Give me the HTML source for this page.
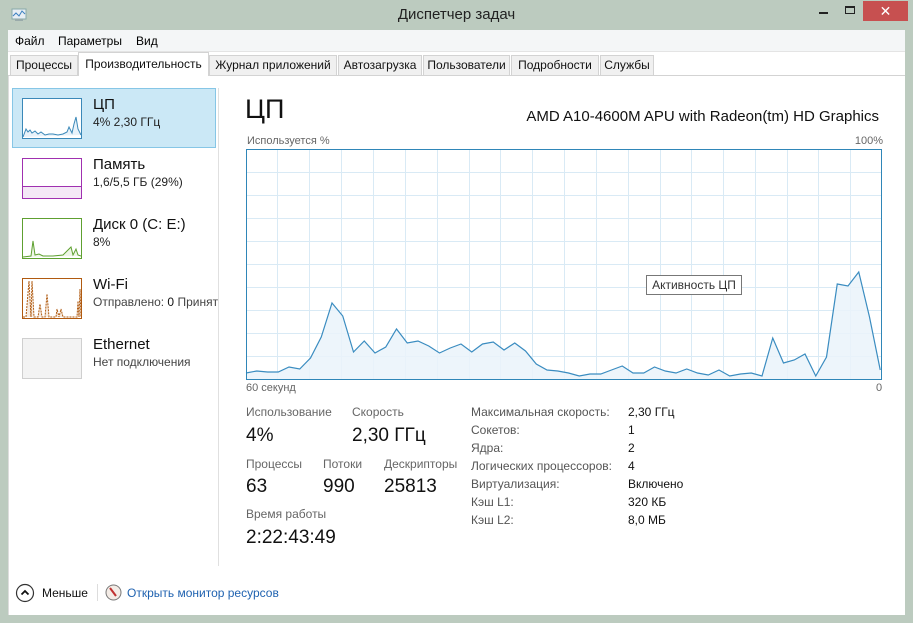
<!DOCTYPE html>
<html><head><meta charset="utf-8"><style>
*{margin:0;padding:0;box-sizing:border-box}
body{width:913px;height:623px;background:#bccbbf;font-family:"Liberation Sans","DejaVu Sans",sans-serif;position:relative;overflow:hidden;color:#000}
.a{position:absolute;white-space:nowrap}
.tab{position:absolute;top:55px;height:20px;background:#f0f0f0;border:1px solid #d3d3d3;border-bottom:none;font-size:12px;line-height:19px;text-align:center;color:#111}
.nm{font-size:15px;color:#111}
.sb{font-size:12px;color:#444}
.th{position:absolute;left:22px;width:60px;height:41px;background:#fff}
.lb{font-size:12px;color:#666}
.bv{font-size:19px;color:#111}
.k{font-size:12px;color:#555}
.v{font-size:12px;color:#111}
</style></head><body>
<!-- title -->
<svg class="a" style="left:10px;top:8px" width="18" height="14"><rect x="2" y="1" width="14" height="10" fill="#e8eef4" stroke="#8aa" stroke-width="1"/><polyline points="3,8 6,5 9,8 12,3 15,6" fill="none" stroke="#3a7fc0" stroke-width="1"/><rect x="5" y="11" width="8" height="2" fill="#9aa"/></svg>
<div class="a" style="left:0;width:913px;top:6px;text-align:center;font-size:15px;color:#222">Диспетчер задач</div>
<div class="a" style="left:819px;top:12px;width:9px;height:2px;background:#222"></div>
<div class="a" style="left:845px;top:6px;width:10px;height:8px;border:1px solid #222;border-top-width:2px"></div>
<div class="a" style="left:863px;top:1px;width:45px;height:20px;background:#c75050;color:#fff;text-align:center;font-size:14px;line-height:20px">✕</div>
<!-- body -->
<div class="a" style="left:8px;top:30px;width:897px;height:585px;background:#fff"></div>
<div class="a" style="left:8px;top:30px;width:897px;height:22px;background:#f4f6f7;border-bottom:1px solid #e4e4e4"></div>
<div class="a" style="left:15px;top:34px;font-size:12px">Файл</div>
<div class="a" style="left:58px;top:34px;font-size:12px">Параметры</div>
<div class="a" style="left:136px;top:34px;font-size:12px">Вид</div>
<div class="a" style="left:8px;top:75px;width:897px;height:1px;background:#d3d3d3"></div>
<div class="tab" style="left:10px;width:68px">Процессы</div>
<div class="tab" style="left:78px;width:131px;top:52px;height:24px;background:#fff;line-height:23px;z-index:2">Производительность</div>
<div class="tab" style="left:209px;width:128px">Журнал приложений</div>
<div class="tab" style="left:338px;width:84px">Автозагрузка</div>
<div class="tab" style="left:423px;width:87px">Пользователи</div>
<div class="tab" style="left:511px;width:88px">Подробности</div>
<div class="tab" style="left:600px;width:54px">Службы</div>
<!-- left panel -->
<div class="a" style="left:12px;top:88px;width:204px;height:60px;background:#cbe8f6;border:1px solid #86c6e6"></div>
<div class="th" style="top:98px;border:1px solid #3a88b8"><svg width="58" height="39"><polyline points="0,38 3,30 5,33 7,31 9,34 12,32 15,35 18,33 22,36 26,35 30,35 35,36 40,35 44,33 46,28 49,34 51,25 53,18 55,30 58,36" fill="#e8f2fa" stroke="#3a88b8"/></svg></div>
<div class="a nm" style="left:93px;top:96px">ЦП</div>
<div class="a sb" style="left:93px;top:115px;color:#222">4% 2,30 ГГц</div>
<div class="th" style="top:158px;border:1px solid #a030b0"><div style="position:absolute;left:0;right:0;bottom:0;height:12px;background:#f4e8f6;border-top:1px solid #a030b0"></div></div>
<div class="a nm" style="left:93px;top:156px">Память</div>
<div class="a sb" style="left:93px;top:175px;color:#222">1,6/5,5 ГБ (29%)</div>
<div class="th" style="top:218px;border:1px solid #5ea030"><svg width="58" height="39"><polyline points="0,38 8,37 10,22 12,36 16,35 20,37 30,37 40,36 48,28 50,36 53,30 55,36 58,37" fill="#eef6e6" stroke="#5ea030"/></svg></div>
<div class="a nm" style="left:93px;top:216px">Диск 0 (C: E:)</div>
<div class="a sb" style="left:93px;top:235px;color:#222">8%</div>
<div class="th" style="top:278px;border:1px solid #b05a10"><svg width="58" height="39"><polyline points="0,38 3,38 6,2 8,38 9,2 11,38 15,38 17,25 19,38 22,38 24,15 26,38 33,38 34,30 36,38 38,30 40,38 54,38 55,22 56,38 57,10 58,38" fill="#f6ebe0" stroke="#b05a10" stroke-dasharray="2,1"/></svg></div>
<div class="a nm" style="left:93px;top:276px">Wi-Fi</div>
<div class="a sb" style="left:93px;top:295px">Отправлено: <span style="color:#111">0</span> Принят</div>
<div class="th" style="top:338px;background:#f3f3f3;border:1px solid #cfcfcf"></div>
<div class="a nm" style="left:93px;top:336px">Ethernet</div>
<div class="a sb" style="left:93px;top:355px">Нет подключения</div>
<div class="a" style="left:218px;top:88px;width:1px;height:478px;background:#e0e0e0"></div>
<div class="a" style="left:8px;top:76px;width:1px;height:539px;background:#ddd"></div>
<!-- right -->
<div class="a" style="left:245px;top:94px;font-size:27px;color:#111">ЦП</div>
<div class="a" style="right:34px;top:108px;font-size:15px;color:#111">AMD A10-4600M APU with Radeon(tm) HD Graphics</div>
<div class="a lb" style="left:247px;top:135px;font-size:11px">Используется %</div>
<div class="a lb" style="right:30px;top:135px;font-size:11px">100%</div>
<svg class="a" style="left:0;top:0" width="913" height="623">
<g stroke="#d9eaf5" stroke-width="1">
<path d="M277.5 150V379M309.5 150V379M341.5 150V379M373.5 150V379M405.5 150V379M437.5 150V379M469.5 150V379M500.5 150V379M532.5 150V379M564.5 150V379M596.5 150V379M628.5 150V379M660.5 150V379M691.5 150V379M723.5 150V379M755.5 150V379M787.5 150V379M818.5 150V379M850.5 150V379"/>
<path d="M247 172.5H882M247 195.5H882M247 218.5H882M247 241.5H882M247 264.5H882M247 287.5H882M247 310.5H882M247 333.5H882M247 356.5H882"/>
</g>
<polygon fill="#eaf3fa" fill-opacity="0.85" stroke="none" points="246,379 246,373 256.75,371 267.5,372 278.25,372 289,367 299.75,369 310.5,358 321.25,337 332,303 342.75,316 353.5,352 364.25,341 375,353 385.75,347 396.5,329 407.25,343 418,341 428.75,346 439.5,353 450.25,348 461,344 471.75,352 482.5,344 493.25,342 504,350 514.75,343 525.5,351 536.25,364 547,370 557.75,371 568.5,373 579.25,376 590,374 600.75,374 611.5,370 622.25,366 633,373 643.75,373 654.5,367 665.25,371 676,373 686.75,369 697.5,373 708.25,375 719,370 729.75,376 740.5,374 751.25,373 762,376 772.75,338 783.5,363 794.25,360 805,354 815.75,376 826.5,357 837.25,284 848,286 858.75,272 869.5,317 880.25,370 880.25,379"/>
<polyline fill="none" stroke="#3a8cc0" stroke-width="1.2" points="246,373 256.75,371 267.5,372 278.25,372 289,367 299.75,369 310.5,358 321.25,337 332,303 342.75,316 353.5,352 364.25,341 375,353 385.75,347 396.5,329 407.25,343 418,341 428.75,346 439.5,353 450.25,348 461,344 471.75,352 482.5,344 493.25,342 504,350 514.75,343 525.5,351 536.25,364 547,370 557.75,371 568.5,373 579.25,376 590,374 600.75,374 611.5,370 622.25,366 633,373 643.75,373 654.5,367 665.25,371 676,373 686.75,369 697.5,373 708.25,375 719,370 729.75,376 740.5,374 751.25,373 762,376 772.75,338 783.5,363 794.25,360 805,354 815.75,376 826.5,357 837.25,284 848,286 858.75,272 869.5,317 880.25,370"/>
<rect x="246.5" y="149.5" width="635" height="230" fill="none" stroke="#2f86b8" stroke-width="1"/>
</svg>
<div class="a" style="left:646px;top:275px;width:96px;height:20px;border:1px solid #777;background:#fff;font-size:12px;line-height:18px;text-align:center;color:#333">Активность ЦП</div>
<div class="a lb" style="left:246px;top:382px;font-size:11px">60 секунд</div>
<div class="a lb" style="left:876px;top:382px;font-size:11px">0</div>
<div class="a lb" style="left:246px;top:405px">Использование</div>
<div class="a lb" style="left:352px;top:405px">Скорость</div>
<div class="a bv" style="left:246px;top:425px">4%</div>
<div class="a bv" style="left:352px;top:425px">2,30 ГГц</div>
<div class="a lb" style="left:246px;top:457px">Процессы</div>
<div class="a lb" style="left:323px;top:457px">Потоки</div>
<div class="a lb" style="left:384px;top:457px">Дескрипторы</div>
<div class="a bv" style="left:246px;top:476px">63</div>
<div class="a bv" style="left:323px;top:476px">990</div>
<div class="a bv" style="left:384px;top:476px">25813</div>
<div class="a lb" style="left:246px;top:507px">Время работы</div>
<div class="a bv" style="left:246px;top:527px">2:22:43:49</div>
<div class="a k" style="left:471px;top:405px">Максимальная скорость:</div><div class="a v" style="left:628px;top:405px">2,30 ГГц</div>
<div class="a k" style="left:471px;top:423px">Сокетов:</div><div class="a v" style="left:628px;top:423px">1</div>
<div class="a k" style="left:471px;top:441px">Ядра:</div><div class="a v" style="left:628px;top:441px">2</div>
<div class="a k" style="left:471px;top:459px">Логических процессоров:</div><div class="a v" style="left:628px;top:459px">4</div>
<div class="a k" style="left:471px;top:477px">Виртуализация:</div><div class="a v" style="left:628px;top:477px">Включено</div>
<div class="a k" style="left:471px;top:495px">Кэш L1:</div><div class="a v" style="left:628px;top:495px">320 КБ</div>
<div class="a k" style="left:471px;top:513px">Кэш L2:</div><div class="a v" style="left:628px;top:513px">8,0 МБ</div>
<!-- footer -->
<svg class="a" style="left:15px;top:583px" width="20" height="20"><circle cx="10" cy="10" r="8.5" fill="#fff" stroke="#333" stroke-width="1.2"/><polyline points="6.5,11.5 10,8 13.5,11.5" fill="none" stroke="#111" stroke-width="1.8"/></svg>
<div class="a" style="left:42px;top:586px;font-size:12px;color:#111">Меньше</div>
<div class="a" style="left:97px;top:584px;width:1px;height:17px;background:#ddd"></div>
<svg class="a" style="left:105px;top:584px" width="17" height="17"><circle cx="8.5" cy="8.5" r="7.5" fill="#f4ece6" stroke="#777"/><line x1="5" y1="4" x2="11" y2="12" stroke="#c03030" stroke-width="2"/></svg>
<div class="a" style="left:127px;top:586px;font-size:12px;color:#1f62b0">Открыть монитор ресурсов</div>
</body></html>
